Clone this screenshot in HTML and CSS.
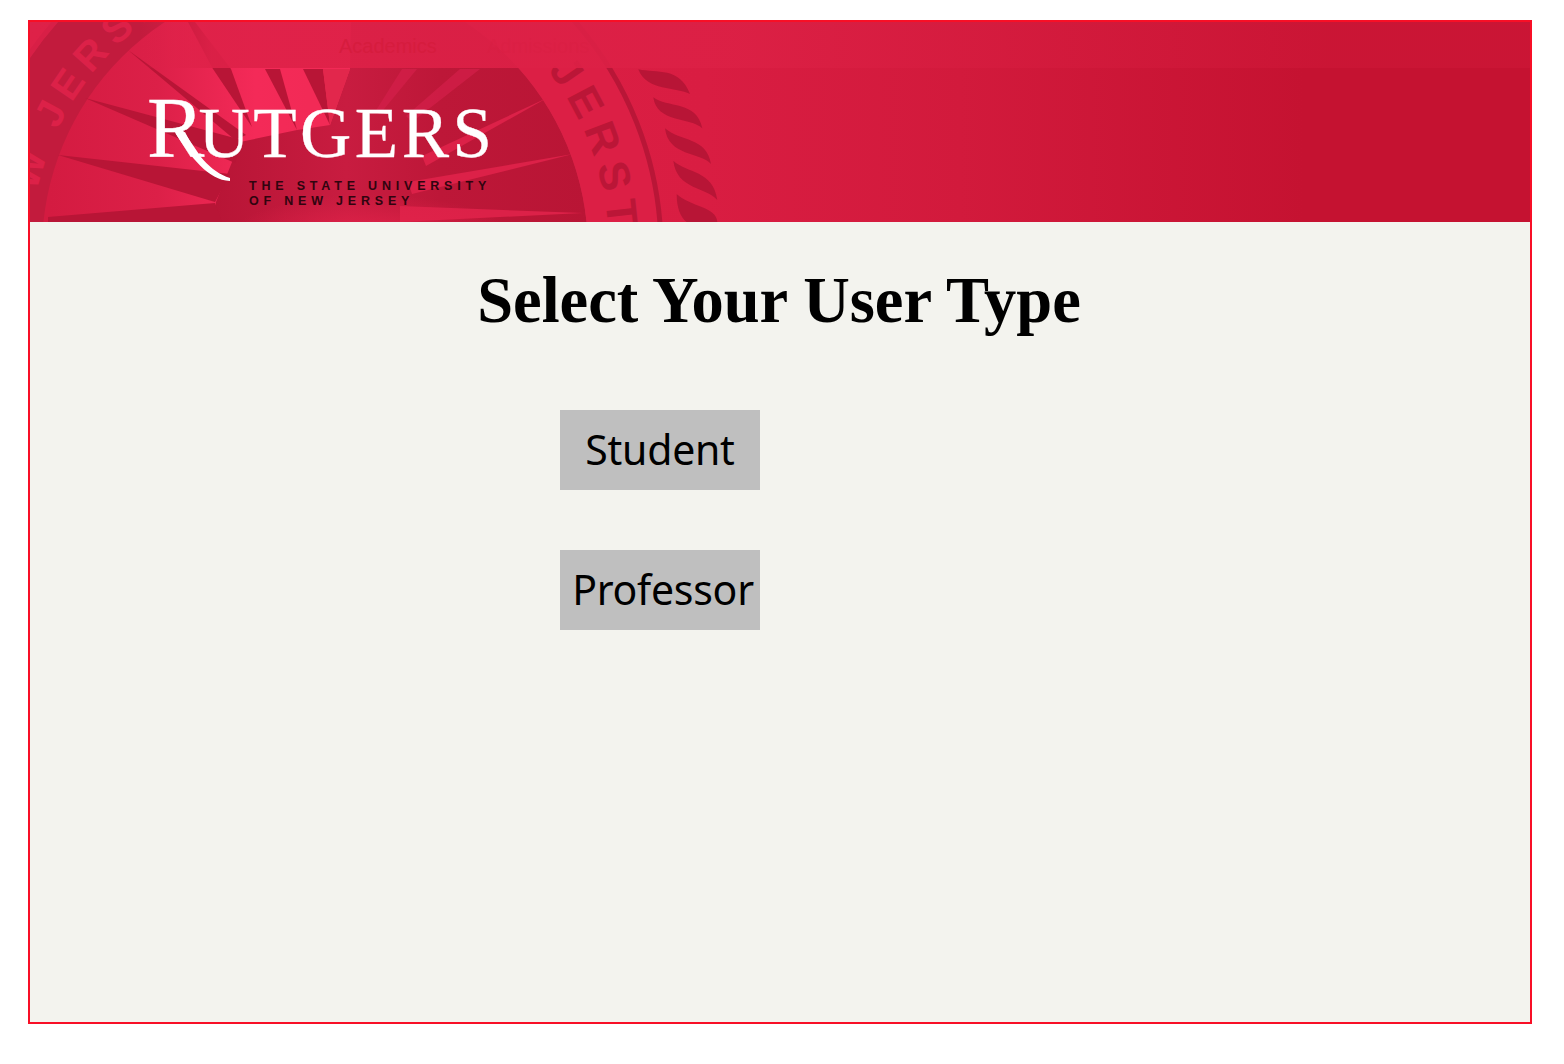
FILE: index.html
```html
<!DOCTYPE html>
<html lang="en">
<head>
  <meta charset="UTF-8" />
  <title>Select Your User Type</title>
  <link rel="stylesheet" href="styles.css">
</head>
<body>
  <div class="frame">
    <header class="banner">
      <!-- seal artwork, coordinates are banner pixels -->
      <svg class="seal" viewBox="0 0 1500 200" preserveAspectRatio="none" aria-hidden="true">
        <defs>
          <linearGradient id="bannerFade" x1="0" x2="1" y1="0" y2="0">
            <stop offset="0" stop-color="#de2148"/>
            <stop offset="0.45" stop-color="#d91d42"/>
            <stop offset="0.62" stop-color="#d21a3c"/>
            <stop offset="0.85" stop-color="#c51231"/>
            <stop offset="1" stop-color="#c51231"/>
          </linearGradient>
          <linearGradient id="discFill" gradientUnits="userSpaceOnUse" x1="20" x2="560" y1="0" y2="0">
            <stop offset="0" stop-color="#d41b41"/>
            <stop offset="0.2" stop-color="#dc2048"/>
            <stop offset="0.38" stop-color="#f42a58"/>
            <stop offset="0.48" stop-color="#f22a56"/>
            <stop offset="1" stop-color="#f22a56"/>
          </linearGradient>
          <linearGradient id="coreFill" gradientUnits="userSpaceOnUse" x1="185" x2="560" y1="0" y2="0">
            <stop offset="0" stop-color="#b81536"/>
            <stop offset="0.35" stop-color="#c81c40"/>
            <stop offset="0.6" stop-color="#bd1738"/>
            <stop offset="1" stop-color="#b91535"/>
          </linearGradient>
          <linearGradient id="bandFill" gradientUnits="userSpaceOnUse" x1="200" x2="400" y1="0" y2="0">
            <stop offset="0" stop-color="#c21b3d"/>
            <stop offset="1" stop-color="#dc1f45"/>
          </linearGradient>
          <linearGradient id="ringFill" gradientUnits="userSpaceOnUse" x1="200" x2="400" y1="0" y2="0">
            <stop offset="0" stop-color="#d81f46"/>
            <stop offset="1" stop-color="#b91637"/>
          </linearGradient>
          <linearGradient id="stripFill" gradientUnits="userSpaceOnUse" x1="110" x2="1300" y1="0" y2="0">
            <stop offset="0" stop-color="#de2148" stop-opacity="0"/>
            <stop offset="0.06" stop-color="#de2148" stop-opacity="0.9"/>
            <stop offset="0.5" stop-color="#dc2045" stop-opacity="0.9"/>
            <stop offset="1" stop-color="#cc1636" stop-opacity="0.75"/>
          </linearGradient>
          <radialGradient id="coreGlow" gradientUnits="userSpaceOnUse" cx="340" cy="215" r="140" gradientTransform="translate(0 150) scale(1 0.3)">
            <stop offset="0" stop-color="#e2234a" stop-opacity="0.95"/>
            <stop offset="1" stop-color="#e2234a" stop-opacity="0"/>
          </radialGradient>
          <path id="sealLeft" d="M 1 228 A 284 284 0 0 1 285 -56"/>
          <path id="sealRight" d="M 285 -66 A 294 294 0 0 1 579 228"/>
        </defs>
        <rect width="1500" height="200" fill="url(#bannerFade)"/>

        <!-- band and rings -->
        <circle cx="285" cy="228" r="308" fill="none" stroke="url(#bandFill)" stroke-width="72"/>
        <circle cx="285" cy="228" r="346" fill="none" stroke="url(#ringFill)" stroke-width="5"/>
        <circle cx="285" cy="228" r="273" fill="url(#discFill)"/>

        <text class="seal-letters seal-letters-left" font-size="40" letter-spacing="8"><textPath href="#sealLeft" startOffset="59">W JERSEY</textPath></text>
        <text class="seal-letters" font-size="43" letter-spacing="8"><textPath href="#sealRight" startOffset="268">JERST</textPath></text>

        <!-- dark part of the disc -->
        <clipPath id="discClip"><circle cx="285" cy="228" r="273"/></clipPath>
        <polygon clip-path="url(#discClip)" points="184,200 186,180 198,150 210,120 267,108 300,103 320,47 322,-40 600,-40 600,200" fill="url(#coreFill)"/>

        <!-- dark spikes, left of the disc -->
        <g fill="#b81536">
          <polygon points="18,195 185,181 192,200 18,200"/>
          <polygon points="28,133 200,152 185,180"/>
          <polygon points="55,76 212,118 205,141"/>
          <polygon points="98,28 216,113 205,118"/>
          <polygon points="158,0 165,0 201,47 222,105 183,47"/>
          <polygon points="235,47 250,47 267,108"/>
          <polygon points="273,47 293,47 300,103"/>
        </g>
        <polygon points="293,47 320,47 300,103" fill="#e2274c"/>

        <!-- light spikes, right of the disc -->
        <g fill="#dc2148">
          <polygon points="517,76 392,134 396,144"/>
          <polygon points="543,132 378,160 382,172"/>
          <polygon points="553,191 370,184 370,200"/>
        </g>
        <g fill="#d4204a" fill-opacity="0.7">
          <polygon points="450,47 430,47 376,94 382,100"/>
          <polygon points="387,47 372,47 345,90 350,92"/>
        </g>
        <rect x="190" y="130" width="310" height="70" fill="url(#coreGlow)"/>

        <!-- wavy leaves round the seal -->
        <g fill="#b81536">
          <path d="M 608.3 47.3 C 626.7 51.3, 650 44.7, 660 72 C 646.7 64.7, 616.7 69.7, 608.3 47.3 Z"/>
          <path d="M 623.3 75.3 C 636.7 86.3, 666.7 78, 672.3 106.3 C 660 94.7, 626.7 101.3, 623.3 75.3 Z"/>
          <path d="M 635 106.3 C 650 119.7, 676.7 114.7, 681 142 C 670 129.7, 638.3 134.7, 635 106.3 Z"/>
          <path d="M 643.3 138.7 C 656.7 151.3, 683.3 148, 687.3 178 C 676.7 164.7, 646.7 168, 643.3 138.7 Z"/>
          <path d="M 646.7 172 C 660 184.7, 686.7 184.7, 687.3 200 L 656.7 200 C 650 195, 646.7 185, 646.7 172 Z"/>
        </g>

        <!-- paler nav strip laid over the seal -->
        <rect x="110" width="1390" height="46" fill="url(#stripFill)"/>
        <text class="nav-ghost" x="309" y="31" font-size="20">Academics</text>
        <text class="nav-ghost nav-ghost-faint" x="457" y="31" font-size="20">Admissions</text>

        <!-- R tail -->
        <path d="M 146 112 L 155 110 C 165 130, 180 150, 200 156 L 200 159 C 178 158, 161 135, 146 112 Z" fill="#fff"/>
      </svg>

      <div class="logo">
        <div class="logo-word"><span class="logo-cap">R</span>UTGERS</div>
        <div class="logo-sub">
          <span>THE STATE UNIVERSITY</span>
          <span>OF NEW JERSEY</span>
        </div>
      </div>
    </header>

    <main class="content">
      <h1>Select Your User Type</h1>
      <div class="user-types">
        <button class="user-btn">Student</button>
        <button class="user-btn user-btn-wide">Professor</button>
      </div>
    </main>
  </div>
</body>
</html>
```

FILE: styles.css
```css
* {
  margin: 0;
  padding: 0;
  box-sizing: border-box;
}

body {
  background: #fff;
  padding: 20px 32px 40px 28px;
}

.frame {
  border: 2px solid #f80f26;
  background: #f3f3ee;
  height: 1004px;
}

.banner {
  position: relative;
  height: 200px;
  overflow: hidden;
  padding: 66px 0 0 117px;
}

.seal {
  position: absolute;
  top: 0;
  left: 0;
  width: 100%;
  height: 100%;
}

.seal-letters {
  fill: #bb1637;
  font-family: "Liberation Sans", sans-serif;
  font-weight: bold;
}

.seal-letters-left {
  fill: #dc2148;
}

.nav-ghost {
  fill: #d61c3e;
  font-family: "Liberation Sans", sans-serif;
}

.nav-ghost-faint {
  fill-opacity: 0.2;
}

.logo {
  position: relative;
  width: 360px;
}

.logo-word {
  color: #fff;
  font-family: "Liberation Serif", serif;
  font-size: 71px;
  letter-spacing: 3.5px;
  line-height: 80px;
  height: 80px;
  white-space: nowrap;
  -webkit-text-stroke: 0.3px #fff;
}

.logo-cap {
  font-size: 86px;
  margin-right: -9.5px;
}

.logo-sub {
  display: flex;
  flex-direction: column;
  margin: 11px 0 0 102px;
  color: #30040f;
  font-family: "Liberation Sans", sans-serif;
  font-size: 12.5px;
  font-weight: bold;
  letter-spacing: 4.8px;
  line-height: 15px;
  white-space: nowrap;
}

.content {
  padding-top: 44px;
}

h1 {
  padding-right: 2px;
  font-family: "Liberation Serif", serif;
  font-size: 64.5px;
  font-weight: bold;
  line-height: 70px;
  text-align: center;
  color: #000;
}

.user-types {
  display: flex;
  flex-direction: column;
  gap: 60px;
  margin: 74px 0 0 530px;
}

.user-btn {
  width: 200px;
  height: 80px;
  border: none;
  padding-bottom: 2px;
  background: #bfbfbf;
  color: #000;
  font-family: "Noto Sans", sans-serif;
  font-size: 41px;
  letter-spacing: -0.25px;
  white-space: nowrap;
}

.user-btn-wide {
  padding-left: 6px;
}
```
